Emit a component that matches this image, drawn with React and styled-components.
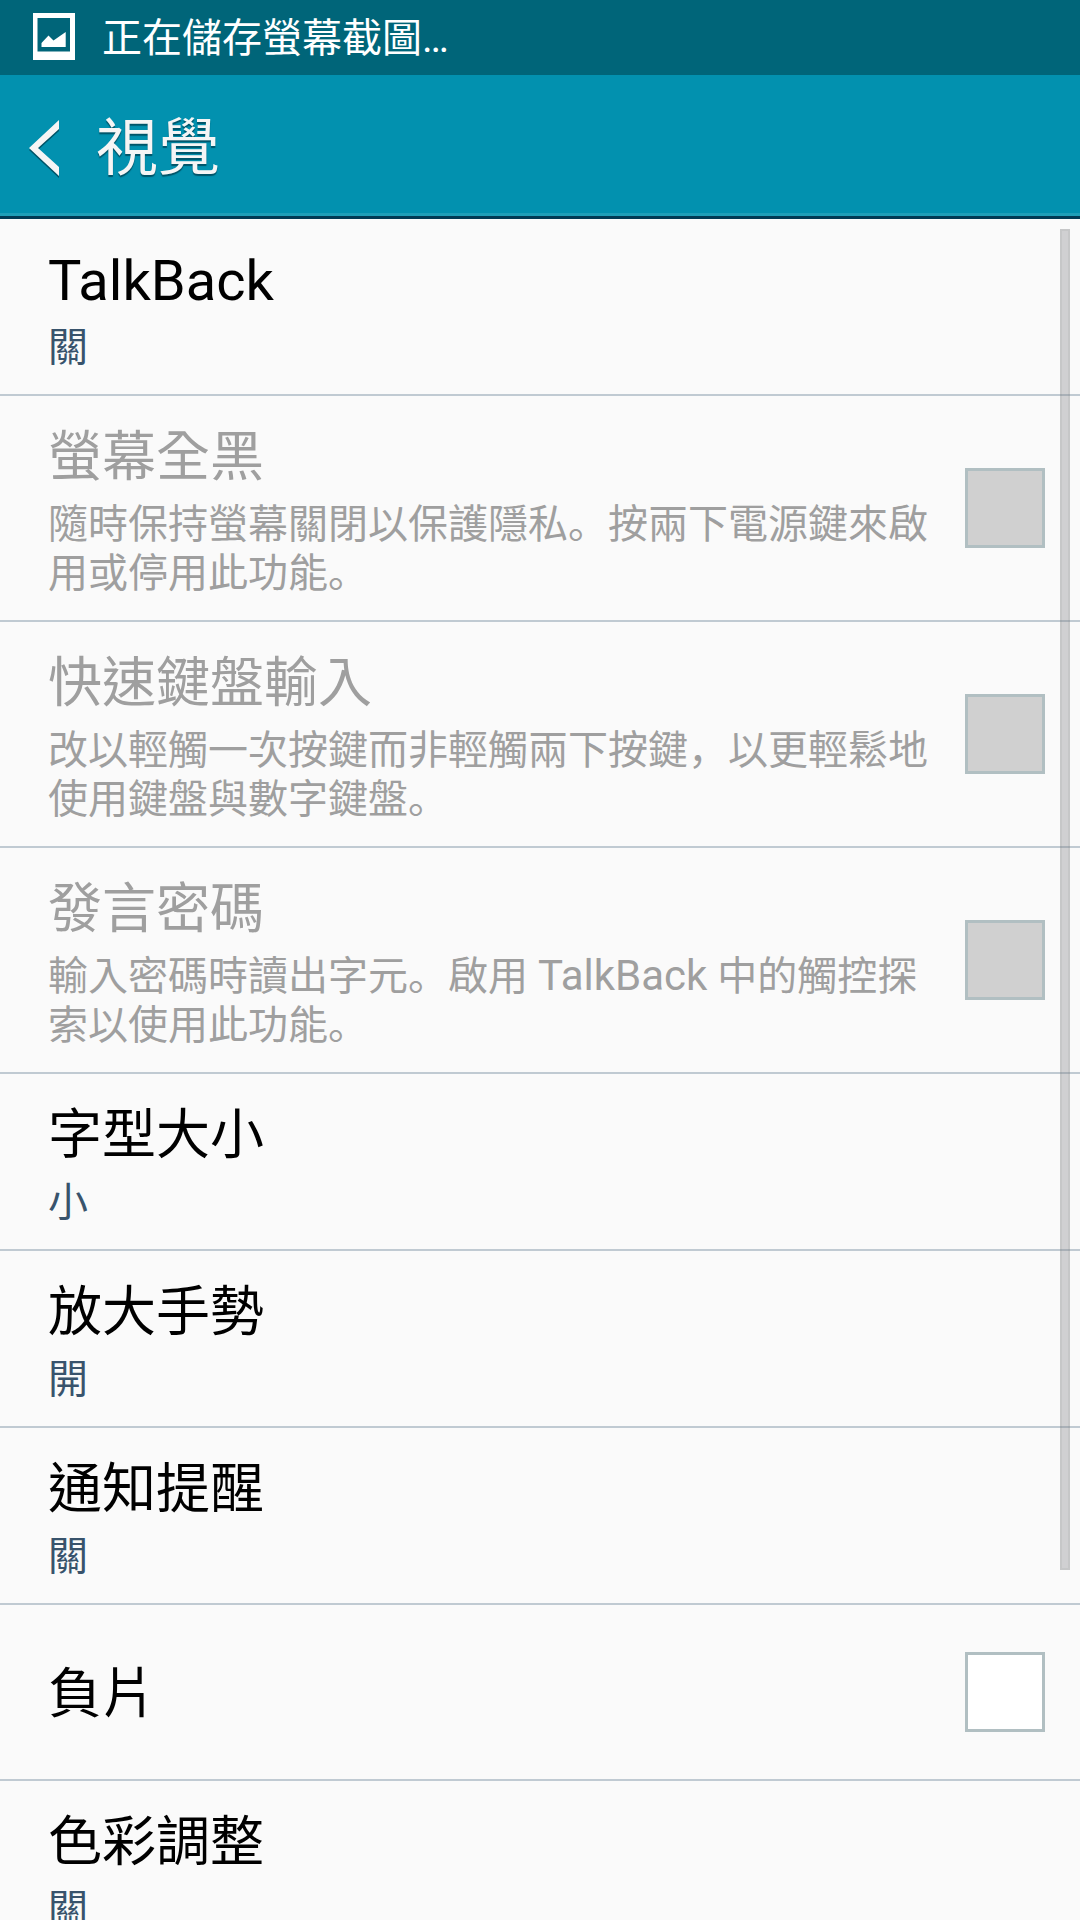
import React from 'react'
import styled, { createGlobalStyle } from 'styled-components'

const GlobalStyle = createGlobalStyle`
	* {
		box-sizing: border-box;
	}

	body {
		margin: 0;
		background-color: #fafafa;
		font-family: Roboto, 'Noto Sans CJK TC', sans-serif;
	}
`

const Screen = styled.div`
	height: 100vh;
	display: flex;
	flex-direction: column;
	overflow: hidden;
`

const StatusBar = styled.div`
	flex: none;
	display: flex;
	align-items: center;
	height: 75px;
	padding: 0 33px 2px;
	gap: 27px;
	background-color: #006579;
	color: white;
	font-size: 40px;
	line-height: 50px;
`

const StatusText = styled.span`
	padding-top: 4px;
`

const Header = styled.header`
	flex: none;
	display: flex;
	align-items: center;
	height: 144px;
	padding: 6px 28px 0;
	gap: 36px;
	background-color: #0291af;
	border-bottom: 3px solid #003a54;
	box-shadow: inset 0 -3px #1e9fb8;
`

const BackButton = styled.button`
	display: flex;
	padding: 0;
	border: none;
	background: none;
`

const HeaderTitle = styled.h1`
	margin: 0;
	color: #f5f5f5;
	font-size: 62px;
	font-weight: 400;
	line-height: 76px;
	text-shadow: 0 2px 1px #005468;
`

const Content = styled.main`
	flex: 1;
	min-height: 0;
	position: relative;
	overflow: hidden;
`

const List = styled.ul`
	margin: 0;
	padding: 0;
	list-style: none;
`

const Item = styled.li`
	border-bottom: 2px solid #c0cad2;
`

const Row = styled.label`
	display: flex;
	align-items: center;
	min-height: 174px;
	padding: 0 35px 0 48px;
	gap: 36px;
	color: ${props => (props.$disabled ? '#9f9f9f' : 'black')};
`

const Texts = styled.div`
	flex: 1;
	display: flex;
	flex-direction: column;
	padding: 27px 0 22px;
	gap: 7px;
`

const Title = styled.div`
	font-size: ${props => (props.$latin ? 56 : 54)}px;
	line-height: 70px;
`

const Summary = styled.div`
	color: ${props => (props.$disabled ? '#9f9f9f' : '#38536c')};
	font-size: 40px;
	line-height: 49px;
`

const Mark = styled.span`
	font-family: 'Noto Sans CJK SC', sans-serif;
	line-height: 1;
`

const Latin = styled.span`
	font-size: 42px;
	line-height: 1;
`

const CheckBox = styled.input`
	appearance: none;
	flex: none;
	width: 80px;
	height: 80px;
	margin: 0;
	border: 3px solid #b1bfc2;
	background-color: white;

	&:disabled {
		background-color: #d0d0d0;
	}
`

const ScrollThumb = styled.div`
	position: absolute;
	top: 10px;
	right: 10px;
	bottom: 350px;
	width: 10px;
	border: 2px solid rgba(120, 122, 124, 0.4);
	background-color: rgba(120, 122, 128, 0.32);
	background-clip: padding-box;
`

const settings = [
	{ title: 'TalkBack', summary: '關', latin: true },
	{
		title: '螢幕全黑',
		summary: '隨時保持螢幕關閉以保護隱私。按兩下電源鍵來啟用或停用此功能。',
		checkbox: true,
		disabled: true
	},
	{
		title: '快速鍵盤輸入',
		summary: '改以輕觸一次按鍵而非輕觸兩下按鍵，以更輕鬆地使用鍵盤與數字鍵盤。',
		checkbox: true,
		disabled: true
	},
	{
		title: '發言密碼',
		summary: '輸入密碼時讀出字元。啟用 TalkBack 中的觸控探索以使用此功能。',
		checkbox: true,
		disabled: true
	},
	{ title: '字型大小', summary: '小' },
	{ title: '放大手勢', summary: '開' },
	{ title: '通知提醒', summary: '關' },
	{ title: '負片', checkbox: true },
	{ title: '色彩調整', summary: '關' }
]

// zh-Hans sets the stop and comma on the baseline instead of mid-height,
// and latin words are a little larger than the characters around them
const renderSummary = text =>
	text.split(/([。，]|[A-Za-z]+)/).map((part, i) => {
		if (i % 2 === 0) return part
		if (/[A-Za-z]/.test(part)) return <Latin key={i}>{part}</Latin>
		return (
			<Mark key={i} lang="zh-Hans">
				{part}
			</Mark>
		)
	})

const Setting = ({ title, summary, latin, checkbox, disabled }) => (
	<Item>
		<Row as={checkbox ? 'label' : 'div'} $disabled={disabled}>
			<Texts>
				<Title $latin={latin}>{title}</Title>
				{summary && <Summary $disabled={disabled}>{renderSummary(summary)}</Summary>}
			</Texts>
			{checkbox && <CheckBox type="checkbox" disabled={disabled} />}
		</Row>
	</Item>
)

export default function App() {
	return (
		<Screen lang="zh-Hant">
			<GlobalStyle />
			<StatusBar>
				<svg width="42" height="47" viewBox="0 0 42 47">
					<path fill="white" fillRule="evenodd" d="M0 0H42V47H0ZM4.5 5V38.5H37V5Z" />
					<path fill="white" d="M8.5 34V30L15.5 22.5L20.5 27.5L32.7 19V34Z" />
				</svg>
				<StatusText>正在儲存螢幕截圖…</StatusText>
			</StatusBar>
			<Header>
				<BackButton type="button" aria-label="返回">
					<svg width="32" height="60" viewBox="0 0 32 60">
						<path fill="#005468" d="M31 3V12L10 31L31 50V59L1 31Z" />
						<path fill="#f5f5f5" d="M31 1V10L10 29L31 48V57L1 29Z" />
					</svg>
				</BackButton>
				<HeaderTitle>視覺</HeaderTitle>
			</Header>
			<Content>
				<List>
					{settings.map(item => (
						<Setting key={item.title} {...item} />
					))}
				</List>
				<ScrollThumb />
			</Content>
		</Screen>
	)
}
